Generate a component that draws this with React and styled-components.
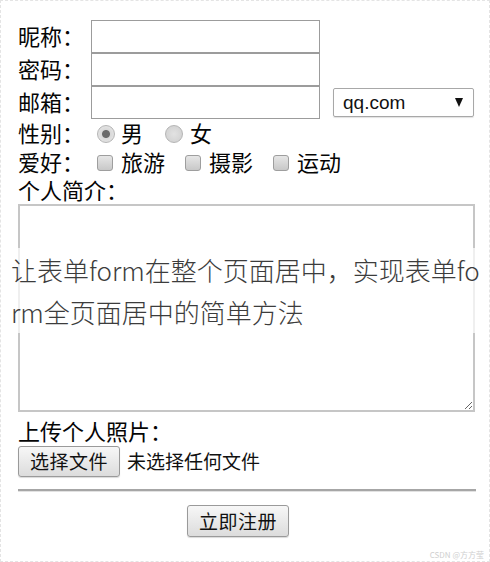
import React from 'react';
import styled, { createGlobalStyle } from 'styled-components';

const Global = createGlobalStyle`
  html, body { margin: 0; padding: 0; background: #fff; }
`;

const Page = styled.div`
  position: relative;
  width: 490px;
  height: 562px;
  box-sizing: border-box;
  border: 1px dashed #e4e4e4;
  padding: 19px 0 0 17px;
  font-family: "Noto Sans CJK SC", sans-serif;
  color: #111;
  overflow: hidden;
`;

const Form = styled.form`
  display: flex;
  flex-direction: column;
  margin: 0;
`;

const Row = styled.div`
  display: flex;
  align-items: center;
  height: ${p => p.$h}px;
  margin-top: ${p => p.$mt || 0}px;
`;

const Label = styled.span`
  font-size: 22px;
  line-height: 1;
  padding-bottom: 4px;
  color: #050505;
  white-space: nowrap;
`;

const TextInput = styled.input`
  box-sizing: border-box;
  width: 229px;
  height: 33px;
  margin: 0 0 0 7px;
  border: 1px solid #9c9c9c;
  background: #fff;
  padding: 0 4px;
  outline: none;
`;

const SelectBox = styled.div`
  box-sizing: border-box;
  display: flex;
  align-items: center;
  justify-content: space-between;
  width: 141px;
  height: 29px;
  margin-left: 13px;
  padding: 0 10px 0 9px;
  border: 1px solid #a8a8a8;
  border-radius: 2px;
  box-shadow: 0 1px 1px rgba(0, 0, 0, 0.12);
  font-family: "Liberation Sans", Arial, sans-serif;
  font-size: 19px;
  color: #111;
`;

const Arrow = styled.span`
  width: 0;
  height: 0;
  border-left: 4px solid transparent;
  border-right: 4px solid transparent;
  border-top: 9px solid #111;
`;

const Options = styled.div`
  display: flex;
  align-items: center;
  gap: ${p => p.$gap}px;
  margin-left: 13px;
`;

const Option = styled.label`
  display: flex;
  align-items: center;
  gap: ${p => p.$gap}px;
  font-size: 22px;
  line-height: 1;
  color: #050505;
`;

const OptionText = styled.span`
  padding-bottom: 4px;
`;

const Radio = styled.input.attrs({ type: 'radio' })`
  appearance: none;
  box-sizing: border-box;
  width: 18px;
  height: 18px;
  margin: 0;
  border-radius: 50%;
  border: 1px solid #b5b5b5;
  background: radial-gradient(circle, #e2e2e2 0%, #cecece 100%);
  &:checked {
    background: radial-gradient(circle, #6a6a6a 0 3.5px, #d9d9d9 4.5px, #ececec 100%);
  }
`;

const Checkbox = styled.input.attrs({ type: 'checkbox' })`
  appearance: none;
  box-sizing: border-box;
  width: 16px;
  height: 16px;
  margin: 0;
  border-radius: 3px;
  border: 1px solid #9e9e9e;
  background: linear-gradient(#e6e6e6, #c8c8c8);
`;

const TextArea = styled.textarea`
  display: block;
  box-sizing: border-box;
  width: 457px;
  height: 208px;
  margin: 0;
  border: 2px solid #c6c6c6;
  background: #fff;
  resize: both;
  outline: none;
`;

const Button = styled.button`
  box-sizing: border-box;
  width: 102px;
  height: ${p => p.$h || 31}px;
  padding: 0 0 2px;
  margin-left: ${p => p.$ml || 0}px;
  border: 1px solid #9a9a9a;
  border-radius: 3px;
  background: linear-gradient(#f7f7f7, #dcdcdc);
  box-shadow: 0 1px 1px rgba(0, 0, 0, 0.15);
  font-family: "Noto Sans CJK SC", sans-serif;
  font-size: 19px;
  color: #111;
  letter-spacing: 0.5px;
`;

const FileNote = styled.span`
  margin-left: 7px;
  padding-bottom: 2px;
  font-size: 19px;
  color: #111;
`;

const Rule = styled.div`
  width: 458px;
  height: 2px;
  margin-top: 12px;
  background: #a6a6a6;
  box-shadow: 0 1px 0 #e2e2e2;
`;

const Banner = styled.div`
  position: absolute;
  top: 247px;
  left: 0;
  right: 0;
  padding: 1px 0 0 10px;
  background: rgba(255, 255, 255, 0.72);
  font-family: "Noto Sans CJK SC", sans-serif;
  font-weight: 200;
  font-size: 26px;
  line-height: 42px;
  color: #3c3c3c;
  white-space: nowrap;
`;

const Watermark = styled.span`
  position: absolute;
  right: 5px;
  bottom: 1px;
  font-size: 8px;
  color: #cfcfcf;
`;

export default function App() {
  return (
    <>
      <Global />
      <Page>
        <Form onSubmit={e => e.preventDefault()}>
          <Row $h={33}>
            <Label>昵称：</Label>
            <TextInput type="text" />
          </Row>
          <Row $h={33}>
            <Label>密码：</Label>
            <TextInput type="password" />
          </Row>
          <Row $h={33}>
            <Label>邮箱：</Label>
            <TextInput type="text" />
            <SelectBox>
              <span>qq.com</span>
              <Arrow />
            </SelectBox>
          </Row>
          <Row $h={30}>
            <Label>性别：</Label>
            <Options $gap={22}>
              <Option $gap={6}>
                <Radio name="sex" defaultChecked />
                <OptionText>男</OptionText>
              </Option>
              <Option $gap={7}>
                <Radio name="sex" />
                <OptionText>女</OptionText>
              </Option>
            </Options>
          </Row>
          <Row $h={28}>
            <Label>爱好：</Label>
            <Options $gap={20}>
              <Option $gap={8}>
                <Checkbox />
                <OptionText>旅游</OptionText>
              </Option>
              <Option $gap={8}>
                <Checkbox />
                <OptionText>摄影</OptionText>
              </Option>
              <Option $gap={8}>
                <Checkbox />
                <OptionText>运动</OptionText>
              </Option>
            </Options>
          </Row>
          <Row $h={27}>
            <Label>个人简介：</Label>
          </Row>
          <TextArea />
          <Row $h={28} $mt={6}>
            <Label>上传个人照片：</Label>
          </Row>
          <Row $h={31}>
            <Button type="button">选择文件</Button>
            <FileNote>未选择任何文件</FileNote>
          </Row>
          <Rule />
          <Row $h={32} $mt={14}>
            <Button type="submit" $h={32} $ml={169}>立即注册</Button>
          </Row>
        </Form>
        <Banner>
          让表单form在整个页面居中，实现表单fo
          <br />
          rm全页面居中的简单方法
        </Banner>
        <Watermark>CSDN @方方莹</Watermark>
      </Page>
    </>
  );
}
